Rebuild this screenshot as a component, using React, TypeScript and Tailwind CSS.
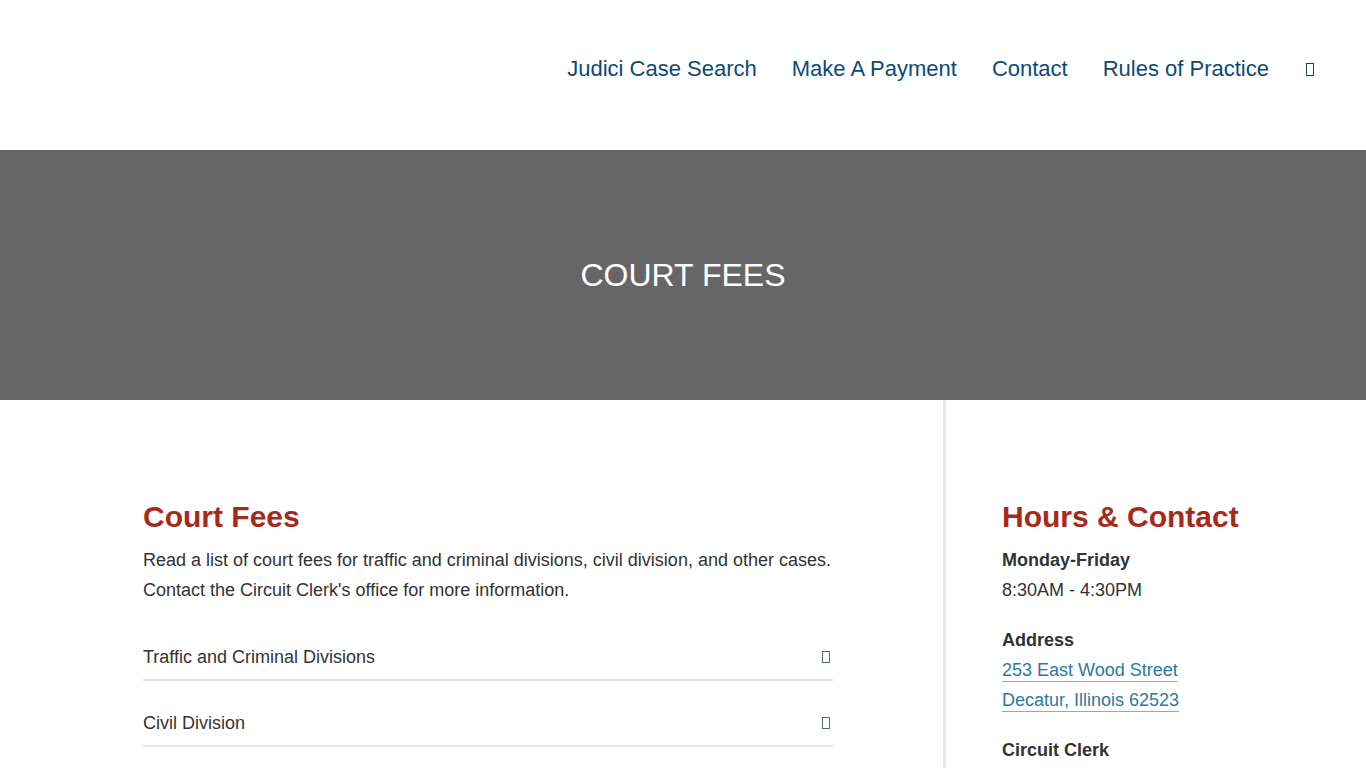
import React from 'react';

const navLinks = ['Judici Case Search', 'Make A Payment', 'Contact', 'Rules of Practice'];
const feeSections = ['Traffic and Criminal Divisions', 'Civil Division'];

// missing-glyph box, like the icon font that never loaded
const Tofu = ({className}: {className?: string}) => (
    <span className={`inline-block w-[8px] h-[12px] border border-current ${className ?? ''}`}/>
);

const App = () => {
    return (
        <div className="min-h-screen bg-white text-[#333] font-['Liberation_Sans',Arial,sans-serif] overflow-hidden">
            <header className="h-[150px] flex justify-end items-start pt-[54px] pr-[52px]">
                <nav className="flex items-center gap-[35px] text-[22px] leading-[30px] text-[#0b4b77]">
                    {navLinks.map((link) => (
                        <a key={link} href="#" className="hover:underline">{link}</a>
                    ))}
                    <button className="ml-[2px] flex items-center text-[#1d3f5c]" aria-label="Search">
                        <Tofu className="h-[13px]"/>
                    </button>
                </nav>
            </header>

            <section className="h-[250px] bg-[#666666] flex items-center justify-center">
                <h1 className="text-white text-[32px] leading-[40px] uppercase">Court Fees</h1>
            </section>

            <main className="flex">
                <div className="w-[946px] shrink-0 border-r-[3px] border-[#e6e9ea] pl-[143px] pr-[110px] pt-[99px] pb-10">
                    <h2 className="text-[30px] leading-[36px] font-bold text-[#a52a1b]">Court Fees</h2>
                    <p className="mt-[10px] text-[18px] leading-[30px]">
                        Read a list of court fees for traffic and criminal divisions, civil division, and other cases.
                        Contact the Circuit Clerk's office for more information.
                    </p>
                    <div className="mt-[10px]">
                        {feeSections.map((s) => (
                            <div key={s} className="flex items-center justify-between pt-[27px] pb-[7px] border-b-2 border-[#e5e5e5] text-[18px] leading-[30px]">
                                <span>{s}</span>
                                <Tofu className="mr-[3px] text-[#4a6f8a]"/>
                            </div>
                        ))}
                    </div>
                </div>

                <aside className="flex-1 pl-[56px] pt-[99px] pb-10 text-[18px] leading-[30px]">
                    <h2 className="text-[30px] leading-[36px] font-bold text-[#a52a1b]">Hours &amp; Contact</h2>
                    <div className="mt-[10px]">
                        <p className="font-bold">Monday-Friday</p>
                        <p>8:30AM - 4:30PM</p>
                    </div>
                    <div className="mt-[20px]">
                        <p className="font-bold">Address</p>
                        <a href="#" className="block w-fit text-[#2a7aa3] underline decoration-1 underline-offset-[5px] decoration-[#7fb0ca]">
                            253 East Wood Street
                        </a>
                        <a href="#" className="block w-fit text-[#2a7aa3] underline decoration-1 underline-offset-[5px] decoration-[#7fb0ca]">
                            Decatur, Illinois 62523
                        </a>
                    </div>
                    <div className="mt-[20px]">
                        <p className="font-bold">Circuit Clerk</p>
                    </div>
                </aside>
            </main>
        </div>
    );
};

export default App;
